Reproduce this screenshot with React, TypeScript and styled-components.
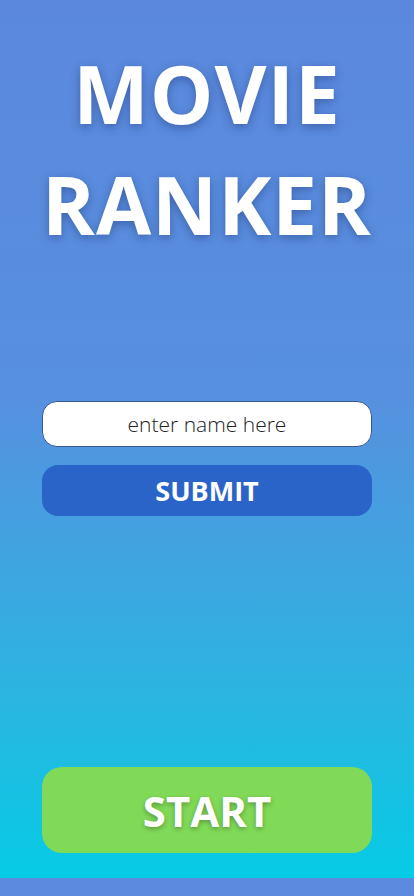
import React, { FC } from "react";
import styled, { createGlobalStyle } from "styled-components";

const GlobalStyle = createGlobalStyle`
  body {
    margin: 0;
    background-color: #5b8ade;
    font-family: "Open Sans", "Liberation Sans", sans-serif;
  }
`;

const Screen = styled.div`
  height: 878px;
  display: flex;
  flex-direction: column;
  align-items: center;
  background: linear-gradient(180deg, #5b88dd 0%, #5790df 45%, #2ab6e1 80%, #06cbe4 100%);
  box-sizing: border-box;
  padding: 0 42px;
`;

const Title = styled.h1`
  margin: 37px 0 0 0;
  color: #fff;
  font-family: "Open Sans", sans-serif;
  font-weight: 700;
  font-size: 80px;
  line-height: 111px;
  text-align: center;
  letter-spacing: 1px;
  text-shadow: 0 3px 10px rgba(30, 50, 110, 0.45);
`;

const Form = styled.div`
  margin-top: 142px;
  width: 100%;
  display: flex;
  flex-direction: column;
  gap: 18px;
`;

const NameInput = styled.input`
  box-sizing: border-box;
  width: 100%;
  height: 46px;
  border: 1px solid #3a5590;
  border-radius: 15px;
  background: #fff;
  text-align: center;
  font-family: "Open Sans", sans-serif;
  font-size: 21px;
  font-weight: 300;
  color: #222;
  outline: none;

  &::placeholder {
    color: #222;
  }
`;

const Button: any = styled.button`
  width: 100%;
  border: none;
  color: #fff;
  font-family: "Open Sans", sans-serif;
  font-weight: 700;
  cursor: pointer;
  height: ${(p: any) => p.$h}px;
  border-radius: ${(p: any) => p.$r}px;
  background-color: ${(p: any) => p.$bg};
  font-size: ${(p: any) => p.$fs}px;
  text-shadow: ${(p: any) => p.$shadow ? "0 2px 5px rgba(0, 0, 0, 0.3)" : "none"};
`;

const Spacer = styled.div`
  flex: 1;
`;

const Footer = styled.div`
  width: 100%;
  padding-bottom: 25px;
`;

const App: FC = () => {
  return (
    <>
      <GlobalStyle />
      <Screen>
        <Title>
          MOVIE
          <br />
          RANKER
        </Title>
        <Form>
          <NameInput placeholder="enter name here" />
          <Button $h={51} $r={16} $bg="#2b64c9" $fs={27}>
            SUBMIT
          </Button>
        </Form>
        <Spacer />
        <Footer>
          <Button $h={86} $r={20} $bg="#80da57" $fs={42} $shadow>
            START
          </Button>
        </Footer>
      </Screen>
    </>
  );
};

export default App;
